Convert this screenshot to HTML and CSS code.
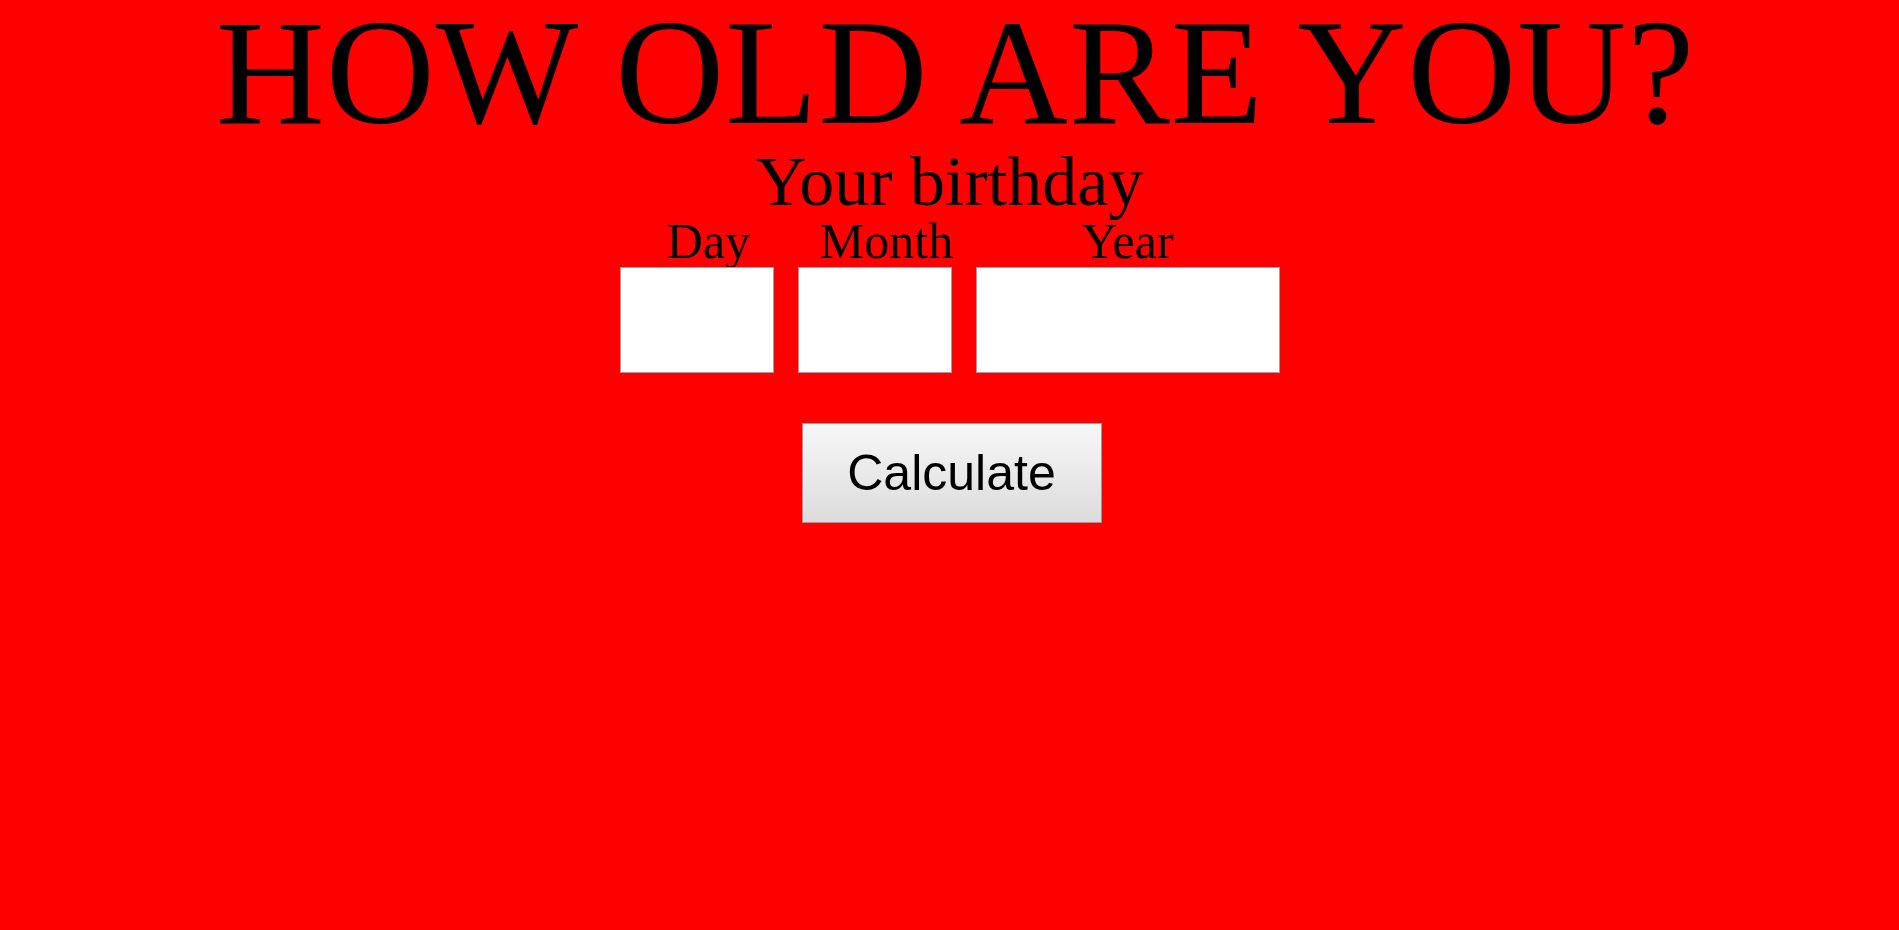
FILE: index.html
```html
<!DOCTYPE html>
<html>
<head>
<meta charset="utf-8">
<title>How old are you?</title>
<link rel="stylesheet" href="styles.css">
</head>
<body>
<main class="page">
  <h1 class="title">HOW OLD ARE YOU?</h1>
  <h2 class="subtitle">Your birthday</h2>
  <div class="fields">
    <label class="field">
      <span class="field-label">Day</span>
      <input class="field-input field-input--small" type="text">
    </label>
    <label class="field">
      <span class="field-label">Month</span>
      <input class="field-input field-input--small" type="text">
    </label>
    <label class="field field--last">
      <span class="field-label">Year</span>
      <input class="field-input field-input--wide" type="text">
    </label>
  </div>
  <div class="actions">
    <button class="calc-btn" type="button">Calculate</button>
  </div>
</main>
</body>
</html>
```

FILE: styles.css
```css
html, body {
  margin: 0;
  padding: 0;
  background: #ff0000;
}

body {
  font-family: "Liberation Serif", "Times New Roman", serif;
  color: #000;
  min-height: 930px;
}

.page {
  display: flex;
  flex-direction: column;
  align-items: center;
}

.title {
  margin: 0;
  padding-left: 12px;
  font-size: 151px;
  font-weight: normal;
  line-height: 144px;
  letter-spacing: 1px;
  white-space: nowrap;
}

.subtitle {
  margin: 0;
  font-size: 70px;
  font-weight: normal;
  line-height: 75px;
}

.fields {
  display: flex;
  justify-content: center;
}

.field {
  display: flex;
  flex-direction: column;
  align-items: stretch;
}

.field-label {
  font-size: 50px;
  line-height: 44px;
  text-align: center;
}

.field-input {
  box-sizing: border-box;
  margin: 4px 24px 0 0;
  height: 106px;
  border: 1px solid #a0a0a0;
  background: #fff;
  padding: 0 4px;
  font-size: 40px;
  font-family: "Liberation Sans", Arial, sans-serif;
  outline: none;
}

.field--last .field-input {
  margin-right: 0;
}

.field-input--small {
  width: 154px;
}

.field-input--wide {
  width: 304px;
}

.actions {
  display: flex;
  justify-content: center;
  margin-top: 50px;
  padding-left: 4px;
}

.calc-btn {
  box-sizing: border-box;
  width: 300px;
  height: 100px;
  border: 1px solid #9a9a9a;
  border-radius: 0;
  background: linear-gradient(#f7f7f7, #dcdcdc);
  font-family: "Liberation Sans", Arial, sans-serif;
  font-size: 50px;
  color: #000;
  padding: 0;
  cursor: pointer;
}
```
